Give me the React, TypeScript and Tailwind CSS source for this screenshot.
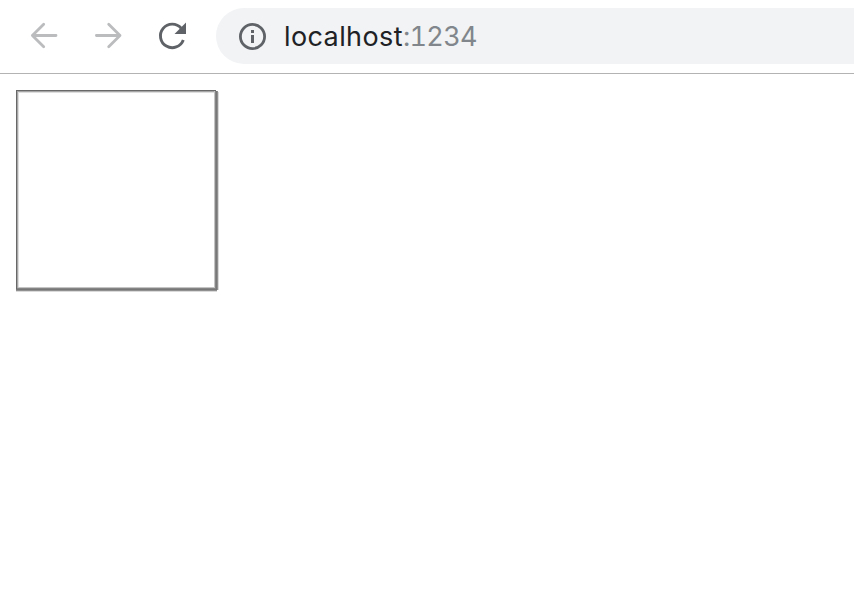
export default function App() {
  return (
    <div className="flex h-[600px] w-[854px] flex-col overflow-hidden bg-white font-['Inter','Liberation_Sans',sans-serif]">
      <header className="flex h-[74px] shrink-0 items-start border-b border-[#b3b3b3] pt-2">
        <nav className="flex h-14 w-[216px] shrink-0 items-center gap-6 pl-6">
          <svg width="40" height="40" viewBox="24 16 40 40" fill="none" stroke="#babcbe" strokeWidth="2.8" strokeLinecap="round" strokeLinejoin="round">
            <path d="M56 35.5H32.4M43.7 24.2L32.4 35.5L43.7 46.8" />
          </svg>
          <svg width="40" height="40" viewBox="88 16 40 40" fill="none" stroke="#babcbe" strokeWidth="2.8" strokeLinecap="round" strokeLinejoin="round">
            <path d="M96.4 35.5H120M108.7 24.2L120 35.5L108.7 46.8" />
          </svg>
          <svg width="40" height="40" viewBox="152 16 40 40" fill="none">
            <path d="M181.2 28.2A11.8 11.8 0 1 0 183.3 40" stroke="#5f6368" strokeWidth="2.9" />
            <path d="M186 22.5V34H174.5z" fill="#5f6368" />
          </svg>
        </nav>
        <div className="flex h-14 flex-1 items-center rounded-l-full bg-[#f1f3f4] pl-[20px]">
          <svg width="32" height="32" viewBox="236 20 32 32" fill="none">
            <circle cx="252.5" cy="36.5" r="12.1" stroke="#5f6368" strokeWidth="2.8" />
            <path d="M251 30h3v3h-3zM251 35h3v8h-3z" fill="#5f6368" />
          </svg>
          <span className="ml-[16px] pt-[2px] text-[27px] leading-8 tracking-[0.4px] text-[#202124]">
            localhost<span className="tracking-[-0.7px] tabular-nums text-[#80868b]">:1234</span>
          </span>
        </div>
      </header>
      <main className="pl-4 pt-4">
        <svg width="204" height="204" viewBox="0 0 204 204" shapeRendering="crispEdges">
          <path fill="#dedede" d="M2 2h1v196h-1zM2 2h196v1H2z" />
          <path fill="#a6a6a6" d="M1 1h1v198h-1zM1 1h197v1H1z" />
          <path fill="#686868" d="M0 0h1v200H0zM0 0h200v1H0z" />
          <path fill="#c4c4c4" d="M198 1h1v197h-1zM2 197h197v1H2z" />
          <path fill="#858585" d="M199 1h1v198h-1zM1 198h199v1H1z" />
          <path fill="#777777" d="M200 1h1v199h-1zM0 199h201v1H0z" />
          <path fill="#909090" d="M201 1h1v199h-1zM0 200h201v1H0z" />
          <path fill="#dadada" d="M202 2h1v198h-1zM0 201h201v1H0z" />
        </svg>
      </main>
    </div>
  );
}
